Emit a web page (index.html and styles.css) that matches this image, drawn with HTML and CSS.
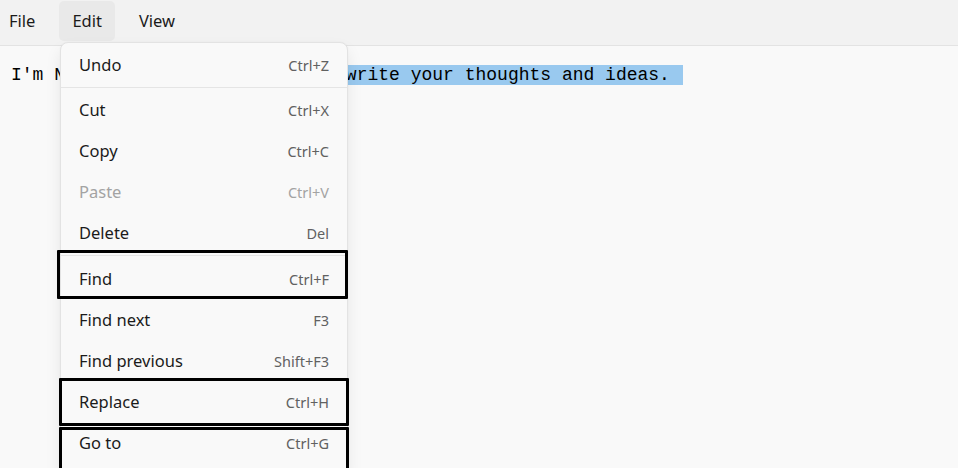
FILE: index.html
```html
<!DOCTYPE html>
<html lang="en">
<head>
<meta charset="utf-8">
<title>Notepad - Edit menu</title>
<link rel="stylesheet" href="styles.css">
</head>
<body>
<div class="app">
  <nav class="menubar">
    <span class="mb-item first">File</span>
    <span class="mb-item active">Edit</span>
    <span class="mb-item">View</span>
  </nav>
  <main class="editor">
    <p class="line">I'm Notepad. <span class="sel">A simple place to write your thoughts and ideas. </span></p>
  </main>

  <div class="menu">
    <div class="item"><span class="label">Undo</span><span class="key">Ctrl+Z</span></div>
    <div class="sep"></div>
    <div class="item"><span class="label">Cut</span><span class="key">Ctrl+X</span></div>
    <div class="item"><span class="label">Copy</span><span class="key">Ctrl+C</span></div>
    <div class="item disabled"><span class="label">Paste</span><span class="key">Ctrl+V</span></div>
    <div class="item"><span class="label">Delete</span><span class="key">Del</span></div>
    <div class="sep sep-wide"></div>
    <div class="item"><span class="label">Find</span><span class="key">Ctrl+F</span></div>
    <div class="item"><span class="label">Find next</span><span class="key">F3</span></div>
    <div class="item"><span class="label">Find previous</span><span class="key">Shift+F3</span></div>
    <div class="item"><span class="label">Replace</span><span class="key">Ctrl+H</span></div>
    <div class="item"><span class="label">Go to</span><span class="key">Ctrl+G</span></div>
  </div>

  <div class="mark mark-find"></div>
  <div class="mark mark-replace"></div>
  <div class="mark mark-goto"></div>
</div>
</body>
</html>
```
FILE: styles.css
```css
* { box-sizing: border-box; }

html, body {
  margin: 0;
  padding: 0;
  width: 958px;
  height: 468px;
  overflow: hidden;
  background: #f9f9f9;
}

.app {
  position: relative;
  width: 958px;
  height: 468px;
  overflow: hidden;
  font-family: "Noto Sans", "Open Sans", sans-serif;
  color: #1b1b1b;
}

.menubar {
  display: flex;
  align-items: flex-start;
  gap: 11px;
  height: 46px;
  padding-top: 1px;
  background: #f2f2f2;
  border-bottom: 1px solid #e3e3e3;
}

.mb-item {
  display: flex;
  align-items: center;
  height: 40px;
  padding: 0 13px 1px;
  border-radius: 5px;
  font-size: 16.5px;
  color: #1b1b1b;
}

.mb-item.first {
  padding-left: 9px;
}

.mb-item.active {
  background: #e9e9e9;
}

.editor {
  padding: 20px 11px;
}

.line {
  margin: 0;
  font-family: "Liberation Mono", "DejaVu Sans Mono", monospace;
  font-size: 18px;
  line-height: 19px;
  color: #000;
  white-space: pre;
}

.sel {
  background: #99c9ef;
  padding-right: 2px;
}

.menu {
  position: absolute;
  left: 60px;
  top: 42px;
  width: 288px;
  padding: 1px 0 12px;
  background: #f9f9f9;
  border: 1px solid #e3e3e3;
  border-radius: 8px;
  box-shadow: 0 8px 16px rgba(0, 0, 0, 0.08), 0 0 2px rgba(0, 0, 0, 0.04);
}

.item {
  display: flex;
  align-items: center;
  justify-content: space-between;
  height: 41px;
  padding: 0 18px;
}

.label {
  font-size: 16.5px;
  color: #1b1b1b;
}

.key {
  font-size: 14.5px;
  color: #616161;
}

.item.disabled .label,
.item.disabled .key {
  color: #a3a3a3;
}

.sep {
  height: 1px;
  margin: 2px 0 1px;
  background: #e5e5e5;
}

.sep.sep-wide {
  margin: 2px 0 2px;
}

.mark {
  position: absolute;
  border: 3px solid #000;
  border-radius: 1px;
}

.mark-find {
  left: 57px;
  top: 250px;
  width: 291px;
  height: 49px;
}

.mark-replace {
  left: 59px;
  top: 378px;
  width: 290px;
  height: 48px;
}

.mark-goto {
  left: 59px;
  top: 427px;
  width: 290px;
  height: 60px;
}
```
